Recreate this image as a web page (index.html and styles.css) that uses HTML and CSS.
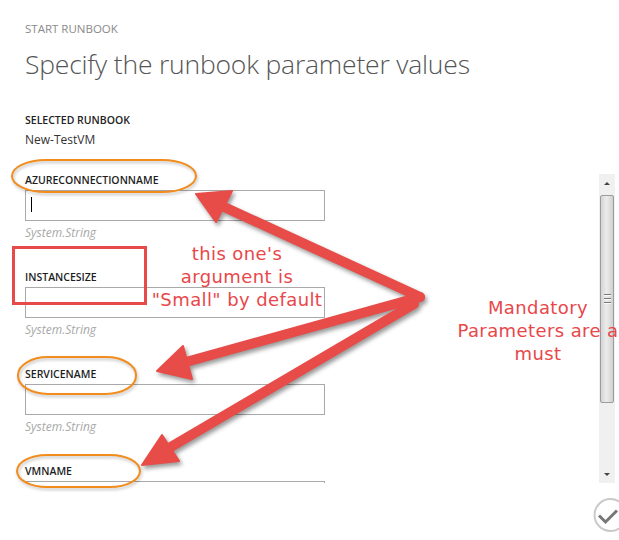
FILE: index.html
```html
<!DOCTYPE html>
<html>
<head>
<meta charset="utf-8">
<link rel="stylesheet" href="styles.css">
</head>
<body>
<div class="page">
  <div class="eyebrow">START RUNBOOK</div>
  <h1 class="title">Specify the runbook parameter values</h1>
  <div class="sel-label">SELECTED RUNBOOK</div>
  <div class="sel-value">New-TestVM</div>

  <div class="scroll">
    <div class="fields">
      <div class="field">
        <div class="field-label">AZURECONNECTIONNAME</div>
        <div class="input"><span class="caret"></span></div>
        <div class="type">System.String</div>
      </div>
      <div class="field">
        <div class="field-label">INSTANCESIZE</div>
        <div class="input"></div>
        <div class="type">System.String</div>
      </div>
      <div class="field">
        <div class="field-label">SERVICENAME</div>
        <div class="input"></div>
        <div class="type">System.String</div>
      </div>
      <div class="field">
        <div class="field-label">VMNAME</div>
        <div class="input"></div>
      </div>
    </div>
    <div class="scrollbar">
      <div class="sb-btn"><span class="tri-up"></span></div>
      <div class="sb-track">
        <div class="sb-thumb"><span class="grip"></span><span class="grip"></span><span class="grip"></span></div>
      </div>
      <div class="sb-btn"><span class="tri-down"></span></div>
    </div>
  </div>

  <div class="footer">
    <svg class="check" width="26" height="36" viewBox="0 0 26 36">
      <circle cx="17.5" cy="17" r="16" fill="none" stroke="#c9c9c9" stroke-width="2"/>
      <polyline points="6,17.5 12.5,24 24,12.5" fill="none" stroke="#777" stroke-width="3"/>
    </svg>
  </div>

  <svg class="annot" width="619" height="540" viewBox="0 0 619 540">
    <g class="rings" fill="none" stroke="#f28c1c" stroke-width="2">
      <rect x="12" y="160" width="184" height="32" rx="34" ry="16"/>
      <rect x="18" y="357" width="118" height="37" rx="30" ry="18"/>
      <rect x="17" y="455" width="123" height="32" rx="30" ry="16"/>
    </g>
    <rect x="13.5" y="247.5" width="132" height="56" fill="none" stroke="#e74a48" stroke-width="3"/>
    <g class="arrows" fill="#e84c48" stroke="#e84c48">
      <line x1="420" y1="297" x2="222" y2="206" stroke-width="10" stroke-linecap="round"/>
      <polygon points="196,194 232,191 216,222" stroke-width="2" stroke-linejoin="round"/>
      <line x1="420" y1="297" x2="186" y2="362" stroke-width="10" stroke-linecap="round"/>
      <polygon points="157,371 183,346 192,379" stroke-width="2" stroke-linejoin="round"/>
      <line x1="414" y1="304" x2="169" y2="448" stroke-width="10" stroke-linecap="round"/>
      <polygon points="142,465 162,435 179,461" stroke-width="2" stroke-linejoin="round"/>
    </g>
  </svg>

  <div class="note note-a">this one's<br>argument is<br>"Small" by default</div>
  <div class="note note-b">Mandatory<br>Parameters are a<br>must</div>
</div>
</body>
</html>
```
FILE: styles.css
```css
html, body {
  margin: 0;
  padding: 0;
  background: #fff;
  overflow: hidden;
}
.page {
  position: relative;
  width: 619px;
  height: 540px;
  font-family: "Open Sans", "Noto Sans", sans-serif;
  color: #222;
}
.eyebrow {
  padding: 21px 0 0 25px;
  font-size: 11.5px;
  line-height: 16px;
  color: #8a8a8a;
}
.title {
  margin: 10px 0 0 0;
  padding-left: 25px;
  font-size: 26.5px;
  line-height: 34px;
  font-weight: 300;
  color: #555;
  letter-spacing: -0.2px;
}
.sel-label {
  margin-top: 31px;
  padding-left: 25px;
  font-size: 10.5px;
  line-height: 16px;
  font-weight: 600;
  color: #222;
}
.sel-value {
  margin-top: 3px;
  padding-left: 25px;
  font-size: 12px;
  line-height: 18px;
  color: #333;
}
.scroll {
  margin-top: 25px;
  height: 309px;
  display: flex;
  overflow: hidden;
}
.fields {
  flex: 1;
  padding-left: 25px;
}
.field {
  margin-bottom: 30px;
}
.field-label {
  font-size: 10.5px;
  line-height: 12px;
  font-weight: 600;
  color: #1e1e1e;
}
.input {
  margin-top: 4px;
  width: 300px;
  height: 31px;
  box-sizing: border-box;
  border: 1px solid #a9a9a9;
  background: #fff;
}
.caret {
  display: block;
  width: 1px;
  height: 15px;
  margin: 6px 0 0 5px;
  background: #000;
}
.type {
  margin-top: 4px;
  font-size: 12px;
  line-height: 16px;
  font-style: italic;
  color: #a8a8a8;
}
.scrollbar {
  width: 16px;
  margin-right: 4px;
  display: flex;
  flex-direction: column;
  background: #f0f0f0;
}
.sb-btn {
  height: 18px;
  display: flex;
  align-items: center;
  justify-content: center;
}
.tri-up {
  width: 0; height: 0;
  border-left: 3px solid transparent;
  border-right: 3px solid transparent;
  border-bottom: 3px solid #444;
}
.tri-down {
  width: 0; height: 0;
  border-left: 3px solid transparent;
  border-right: 3px solid transparent;
  border-top: 3px solid #444;
}
.sb-track {
  flex: 1;
  padding: 3px 1px 0 1px;
}
.sb-thumb {
  height: 208px;
  box-sizing: border-box;
  border: 1px solid #9c9c9c;
  border-radius: 2px;
  background: linear-gradient(to right, #d4d4d4, #ececec 45%, #e0e0e0 70%, #cfcfcf);
  display: flex;
  flex-direction: column;
  align-items: center;
  justify-content: center;
  gap: 2px;
}
.grip {
  display: block;
  width: 7px;
  height: 1px;
  background: #777;
  border-bottom: 1px solid #fafafa;
}
.footer {
  display: flex;
  justify-content: flex-end;
  padding-top: 15px;
}
.check {
  display: block;
}
.annot {
  position: absolute;
  left: 0;
  top: 0;
  pointer-events: none;
}
.rings {
  filter: drop-shadow(1px 2px 1.5px rgba(0,0,0,0.25));
}
.arrows {
  filter: drop-shadow(2px 3px 2px rgba(0,0,0,0.4));
}
.note {
  position: absolute;
  font-family: "DejaVu Sans", Verdana, sans-serif;
  font-size: 18px;
  line-height: 23px;
  letter-spacing: 0.4px;
  color: #e8474a;
  text-align: center;
  white-space: nowrap;
}
.note-a {
  left: 137px;
  width: 200px;
  top: 242px;
}
.note-b {
  left: 438px;
  width: 200px;
  top: 296px;
}
```
